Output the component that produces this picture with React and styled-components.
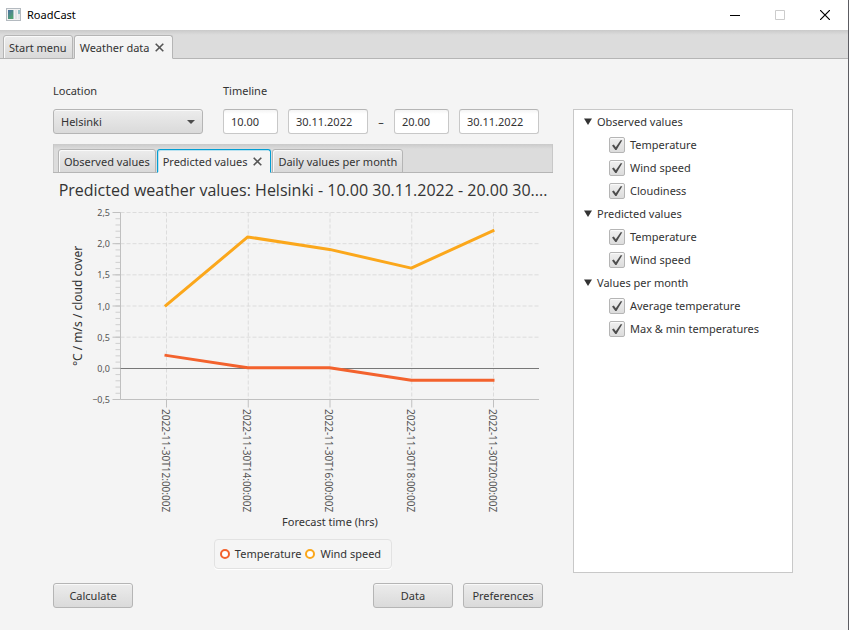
import React, { useState } from "react";
import styled, { createGlobalStyle } from "styled-components";

const GlobalStyle = createGlobalStyle`
  *, *::before, *::after { box-sizing: border-box; }
  body { margin: 0; background: #f4f4f4; }
  body, button, input, select {
    font-family: "Noto Sans", "Open Sans", sans-serif;
    font-size: 11px;
    line-height: 16px;
    color: #333;
  }
`;

const Window = styled.div`
  display: flex;
  flex-direction: column;
  min-height: 100vh;
  background: #f4f4f4;
  border-right: 1px solid #5c5c62;
`;

const TitleBar = styled.header`
  display: flex;
  align-items: center;
  height: 30px;
  padding: 0 1px 0 6px;
  background: #fff;
  color: #000;
`;

const AppIcon = styled.svg`
  width: 16px;
  height: 14px;
  margin-right: 5px;
`;

const AppName = styled.h1`
  flex: 1;
  margin: 0;
  font-size: 11px;
  font-weight: 400;
`;

const CaptionButton = styled.button`
  display: grid;
  place-items: center;
  width: 45px;
  height: 30px;
  padding: 0;
  border: 0;
  background: none;
  color: ${(p) => (p.disabled ? "#ccc" : "#000")};
`;

const TabBar = styled.div`
  display: flex;
  align-items: flex-end;
  gap: 1px;
  height: 29px;
  padding: 0 ${(p) => (p.$inner ? 5 : 3)}px;
  background: linear-gradient(#cacaca, #dcdcdc 5px);
  box-shadow: inset 0 -1px #b5b5b5${(p) => (p.$inner ? ", inset 1px 0 #c8c8c8, inset -1px 0 #c8c8c8" : "")};
`;

const TabItem = styled.div`
  display: flex;
  align-items: center;
  height: 24px;
  border: 1px solid ${(p) => (p.$focused ? "#039ed3" : "#b5b5b5")};
  border-bottom-color: ${(p) => (p.$selected ? "#f4f4f4" : "#b5b5b5")};
  border-radius: 3px 3px 0 0;
  background: ${(p) => (p.$selected ? "#f4f4f4" : "linear-gradient(#ececec, #d9d9d9)")};
  box-shadow: inset 1px 1px ${(p) => (p.$focused ? "#b9e2f0" : "#fafafa")};
`;

const TabButton = styled.button`
  padding: 2px 5px 0;
  border: 0;
  background: none;
  white-space: nowrap;
`;

const CloseButton = styled.button`
  display: grid;
  place-items: center;
  width: 9px;
  height: 16px;
  margin: 0 8px 0 1px;
  padding: 0;
  border: 0;
  background: none;
`;

const Page = styled.main`
  flex: 1;
  display: grid;
  grid-template-columns: minmax(0, 500fr) minmax(0, 220fr);
  grid-template-rows: auto 1fr auto;
  column-gap: 20px;
  row-gap: 10px;
  padding: 24px 55px 22px 53px;
`;

const Labels = styled.div`
  grid-column: 1 / -1;
  display: flex;
  gap: 20px;
`;

const FieldLabel = styled.label`
  flex: 0 0 ${(p) => (p.$wide ? "150px" : "auto")};
`;

const Forecast = styled.section`
  display: flex;
  flex-direction: column;
`;

const Fields = styled.div`
  display: flex;
  align-items: center;
  gap: 10px;
  margin-bottom: 10px;
`;

const SelectBox = styled.div`
  display: grid;
  align-items: center;
  width: 150px;
  margin-right: 10px;

  > * { grid-area: 1 / 1; }
  > svg { justify-self: end; margin-right: 8px; pointer-events: none; }
`;

const Select = styled.select`
  appearance: none;
  width: 100%;
  height: 25px;
  padding: 0 7px;
  border: 1px solid #b5b5b5;
  border-radius: 3px;
  background: linear-gradient(#ececec, #dadada);
  box-shadow: inset 0 1px #f9f9f9;
`;

const TextInput = styled.input`
  width: ${(p) => (p.$short ? 55 : 80)}px;
  height: 25px;
  padding: 0 7px;
  border: 1px solid #c8c8c8;
  border-top-color: #b5b5b5;
  border-radius: 3px;
  background: linear-gradient(#f4f4f4, #fff 4px);
`;

const Dash = styled.span`
  width: 6px;
  text-align: center;
`;

const ChartTitle = styled.h2`
  margin: 0;
  padding: 5px 5px 0;
  font-family: "Open Sans", sans-serif;
  font-size: 16px;
  font-weight: 400;
  line-height: 25px;
  text-align: center;
  white-space: nowrap;
  overflow: hidden;
`;

const Chart = styled.svg`
  display: block;
  width: 100%;
  height: auto;

  text { font-size: 11px; fill: #333; }
  .tick { font-size: 9px; fill: #555; }
  .category { font-size: 10px; fill: #555; }
  .axis-title { font-size: 12px; }
  .grid { stroke: #dcdcdc; stroke-dasharray: 4 2; }
  .axis { stroke: #c0c0c0; }
  .minor { stroke: #cfcfcf; }
  .zero { stroke: #777; }
  .series { fill: none; stroke-width: 3; stroke-linecap: square; stroke-linejoin: round; }
`;

const Legend = styled.ul`
  display: flex;
  align-self: center;
  gap: 4px;
  margin: 3px 0 0;
  padding: 6px 10px 6px 5px;
  list-style: none;
  border: 1px solid #e2e2e2;
  border-radius: 4px;
  background: #f5f5f5;
  box-shadow: 0 1px #fff;
`;

const LegendItem = styled.li`
  display: flex;
  align-items: center;
  gap: 5px;

  &::before {
    content: "";
    width: 10px;
    height: 10px;
    border: 2px solid ${(p) => p.$color};
    border-radius: 50%;
    background: #fff;
  }
`;

const Tree = styled.aside`
  border: 1px solid #c8c8c8;
  background: #fff;
`;

const GroupHeader = styled.button`
  display: flex;
  align-items: center;
  gap: 5px;
  width: 100%;
  height: 23px;
  padding: 0 0 0 10px;
  border: 0;
  background: none;
  text-align: left;
`;

const Leaf = styled.label`
  display: flex;
  align-items: center;
  gap: 5px;
  height: 23px;
  padding-left: 35px;
  white-space: nowrap;
`;

const CheckBox = styled.span`
  display: grid;
  place-items: center;
  > * { grid-area: 1 / 1; }
  > svg { pointer-events: none; visibility: hidden; }
  > input:checked + svg { visibility: visible; }
`;

const CheckInput = styled.input.attrs({ type: "checkbox" })`
  appearance: none;
  width: 16px;
  height: 16px;
  margin: 0;
  border: 1px solid #b5b5b5;
  border-radius: 2px;
  background: linear-gradient(#f0f0f0, #dcdcdc);
  box-shadow: inset 0 1px #fafafa;
`;

const Actions = styled.footer`
  display: flex;
  gap: 10px;
  padding-right: 10px;
`;

const ActionButton = styled.button`
  width: 80px;
  height: 25px;
  padding: 0;
  border: 1px solid #b5b5b5;
  border-radius: 3px;
  background: linear-gradient(#ececec, #dadada);
  box-shadow: inset 0 1px #f9f9f9;
  ${(p) => p.$first && "margin-right: auto;"}
`;

function Tab({ label, selected, focused, closable }) {
  return (
    <TabItem $selected={selected} $focused={focused}>
      <TabButton role="tab" aria-selected={!!selected}>{label}</TabButton>
      {closable && (
        <CloseButton aria-label={`Close ${label}`}>
          <svg width="9" height="9" viewBox="0 0 9 9">
            <path d="M.7.7 8.3 8.3M8.3.7.7 8.3" stroke="#555" strokeWidth="1.6" />
          </svg>
        </CloseButton>
      )}
    </TabItem>
  );
}

const TIMES = ["12", "14", "16", "18", "20"].map((h) => `2022-11-30T${h}:00:00Z`);
const SERIES = [
  { name: "Wind speed", color: "#fba71b", values: [1.0, 2.1, 1.9, 1.6, 2.2] },
  { name: "Temperature", color: "#f3622d", values: [0.2, 0, 0, -0.2, -0.2] },
];
const PLOT = { left: 67.5, right: 486, top: 9.5, bottom: 196.5 };
const xAt = (i) => 113.5 + i * 81.75;
const yAt = (v) => PLOT.bottom - ((v + 0.5) / 3) * (PLOT.bottom - PLOT.top);
const MAJOR = [2.5, 2, 1.5, 1, 0.5, 0, -0.5];
const MINOR = Array.from({ length: 31 }, (_, i) => (i - 5) / 10);
const formatTick = (v) => v.toFixed(1).replace(".", ",").replace("-", "−");

function ForecastChart() {
  return (
    <Chart viewBox="0 0 500 333" role="img" aria-label="Predicted weather values">
      {MAJOR.slice(0, 5).map((v) => (
        <line key={v} className="grid" x1={PLOT.left} x2={PLOT.right} y1={yAt(v)} y2={yAt(v)} />
      ))}
      {TIMES.map((t, i) => (
        <line key={t} className="grid" x1={xAt(i)} x2={xAt(i)} y1={PLOT.top} y2={PLOT.bottom} />
      ))}
      {MINOR.map((v) => (
        <line key={v} className="minor" x1={PLOT.left - 5} x2={PLOT.left} y1={yAt(v)} y2={yAt(v)} />
      ))}
      {MAJOR.map((v) => (
        <g key={v}>
          <line className="axis" x1={PLOT.left - 8} x2={PLOT.left} y1={yAt(v)} y2={yAt(v)} />
          <text className="tick" x="57" y={yAt(v) + 3.5} textAnchor="end">{formatTick(v)}</text>
        </g>
      ))}
      <path className="axis" fill="none" d={`M${PLOT.left} ${PLOT.top}V${PLOT.bottom}H${PLOT.right}`} />
      <line className="zero" x1={PLOT.left} x2={PLOT.right} y1="165.5" y2="165.5" />
      {TIMES.map((t, i) => (
        <g key={t}>
          <line className="axis" x1={xAt(i)} x2={xAt(i)} y1={PLOT.bottom} y2={PLOT.bottom + 8} />
          <text className="category" transform={`translate(${xAt(i) - 5} 206) rotate(90)`}>{t}</text>
        </g>
      ))}
      {SERIES.map((s) => (
        <polyline
          key={s.name}
          className="series"
          stroke={s.color}
          points={s.values.map((v, i) => `${xAt(i) - 0.5},${yAt(v) - 0.5}`).join(" ")}
        />
      ))}
      <text className="axis-title" transform="translate(29 103) rotate(-90)" textAnchor="middle">°C / m/s / cloud cover</text>
      <text x="277" y="323" textAnchor="middle">Forecast time (hrs)</text>
    </Chart>
  );
}

const GROUPS = [
  { name: "Observed values", items: ["Temperature", "Wind speed", "Cloudiness"] },
  { name: "Predicted values", items: ["Temperature", "Wind speed"] },
  { name: "Values per month", items: ["Average temperature", "Max & min temperatures"] },
];

function TreeGroup({ name, items }) {
  const [open, setOpen] = useState(true);
  return (
    <div>
      <GroupHeader aria-expanded={open} onClick={() => setOpen(!open)}>
        <svg width="8" height="8" viewBox="0 0 8 8">
          <path d={open ? "M0 .5h8L4 7z" : "M1 0v8l6-4z"} fill="#333" />
        </svg>
        {name}
      </GroupHeader>
      {open && items.map((item) => (
        <Leaf key={item}>
          <CheckBox>
            <CheckInput defaultChecked />
            <svg width="12" height="12" viewBox="0 0 12 12">
              <path d="M1 6.4 2.8 5.6 4.8 8.2 9.6 1.2 11.3 1.2 5.5 11 4.3 11z" fill="#4d4d4d" />
            </svg>
          </CheckBox>
          {item}
        </Leaf>
      ))}
    </div>
  );
}

export default function App() {
  return (
    <Window>
      <GlobalStyle />
      <TitleBar>
        <AppIcon viewBox="0 0 16 14">
          <defs>
            <linearGradient id="pane" x1="0" y1="0" x2="0.6" y2="1">
              <stop offset="0" stopColor="#4a6fa5" />
              <stop offset="1" stopColor="#4fa36f" />
            </linearGradient>
          </defs>
          <rect x=".5" y=".5" width="14" height="12" fill="#f2f2f2" stroke="#b4bac0" />
          <rect x="2" y="2" width="5" height="9" fill="url(#pane)" />
          <rect x="7" y="2" width="1" height="9" fill="#a9c4c4" />
          <rect x="9" y="2" width="2" height="9" fill="#e0e3e6" />
          <rect x="12" y="2" width="2" height="4" fill="#8fbfc4" />
          <rect x="12" y="6" width="2" height="5" fill="#e4e8ea" />
        </AppIcon>
        <AppName>RoadCast</AppName>
        <CaptionButton aria-label="Minimize">
          <svg width="10" height="10"><path d="M0 5.5h10" stroke="currentColor" /></svg>
        </CaptionButton>
        <CaptionButton aria-label="Maximize" disabled>
          <svg width="10" height="10"><path d="M.5.5h9v9h-9z" fill="none" stroke="currentColor" /></svg>
        </CaptionButton>
        <CaptionButton aria-label="Close">
          <svg width="10" height="10"><path d="M0 0 10 10M10 0 0 10" stroke="currentColor" strokeWidth="1.2" /></svg>
        </CaptionButton>
      </TitleBar>

      <TabBar role="tablist">
        <Tab label="Start menu" />
        <Tab label="Weather data" selected closable />
      </TabBar>

      <Page>
        <Labels>
          <FieldLabel $wide htmlFor="location">Location</FieldLabel>
          <FieldLabel htmlFor="start-time">Timeline</FieldLabel>
        </Labels>

        <Forecast>
          <Fields>
            <SelectBox>
              <Select id="location" defaultValue="Helsinki">
                <option>Helsinki</option>
              </Select>
              <svg width="8" height="4"><path d="M0 0h8L4 4z" fill="#4d4d4d" /></svg>
            </SelectBox>
            <TextInput id="start-time" $short defaultValue="10.00" />
            <TextInput aria-label="Start date" defaultValue="30.11.2022" />
            <Dash>–</Dash>
            <TextInput aria-label="End time" $short defaultValue="20.00" />
            <TextInput aria-label="End date" defaultValue="30.11.2022" />
          </Fields>

          <TabBar role="tablist" $inner>
            <Tab label="Observed values" />
            <Tab label="Predicted values" selected focused closable />
            <Tab label="Daily values per month" />
          </TabBar>

          <ChartTitle>Predicted weather values: Helsinki - 10.00 30.11.2022 - 20.00 30....</ChartTitle>
          <ForecastChart />
          <Legend>
            <LegendItem $color="#f3622d">Temperature</LegendItem>
            <LegendItem $color="#fba71b">Wind speed</LegendItem>
          </Legend>
        </Forecast>

        <Tree>
          {GROUPS.map((g) => <TreeGroup key={g.name} {...g} />)}
        </Tree>

        <Actions>
          <ActionButton $first>Calculate</ActionButton>
          <ActionButton>Data</ActionButton>
          <ActionButton>Preferences</ActionButton>
        </Actions>
      </Page>
    </Window>
  );
}
